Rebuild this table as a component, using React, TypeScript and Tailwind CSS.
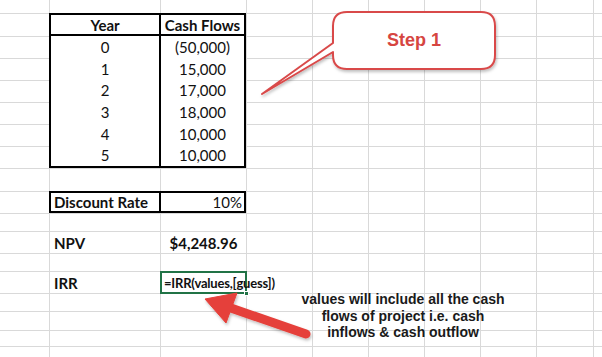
import React from "react";

const COLW = [
  "w-[49px]",
  "w-[111px]",
  "w-[86px]",
  "w-[66px]",
  "w-[56px]",
  "w-[56px]",
  "w-[56px]",
  "w-[56px]",
  "w-[57px]",
  "flex-1",
];

function Cells({ from, to, noTop = false }: { from: number; to: number; noTop?: boolean }) {
  const out: React.ReactNode[] = [];
  for (let i = from; i < to; i++) {
    out.push(
      <div
        key={i}
        className={`${COLW[i]} shrink-0 h-full border-[#d9d9d9] ${i > 0 ? "border-l" : ""} ${noTop ? "" : "border-t"}`}
      />
    );
  }
  return <>{out}</>;
}

function Row({ h, children, noTop = false }: { h: string; children?: React.ReactNode; noTop?: boolean }) {
  return (
    <div className={`flex shrink-0 ${h}`}>
      {children ?? <Cells from={0} to={10} noTop={noTop} />}
    </div>
  );
}

const tableRows: [string, string][] = [
  ["0", "(50,000)"],
  ["1", "15,000"],
  ["2", "17,000"],
  ["3", "18,000"],
  ["4", "10,000"],
  ["5", "10,000"],
];

const sideHeights = ["h-[23px]", "h-[22px]", "h-[22px]", "h-[22px]", "h-[22px]", "h-[22px]", "h-[22px]"];

export default function App() {
  return (
    <div className="relative w-[602px] h-[357px] overflow-hidden bg-white text-[#111] font-['Lato','Open_Sans',sans-serif] text-[15px] leading-[18px]">
      <div className="flex flex-col w-full">
        {/* row 0 */}
        <Row h="h-[13px]" noTop />

        {/* rows 1-7: cash flow table */}
        <div className="flex h-[155px] shrink-0">
          <div className="flex flex-col w-[49px] shrink-0">
            {sideHeights.map((h, i) => (
              <div key={i} className={`${h} shrink-0 border-t border-[#d9d9d9]`} />
            ))}
          </div>
          <div className="w-[197px] shrink-0 border-2 border-black flex flex-col bg-white">
            <div className="flex h-[21px] shrink-0 border-b-2 border-black font-bold">
              <div className="w-[110px] shrink-0 border-r-2 border-black flex items-center justify-center pt-px">
                Year
              </div>
              <div className="flex-1 flex items-center justify-center pt-px">Cash Flows</div>
            </div>
            {tableRows.map(([y, v]) => (
              <div key={y} className="flex flex-1 min-h-0">
                <div className="w-[110px] shrink-0 border-r-2 border-black flex items-center justify-center">
                  {y}
                </div>
                <div className="flex-1 flex items-center justify-center">{v}</div>
              </div>
            ))}
          </div>
          <div className="flex flex-col flex-1">
            {sideHeights.map((h, i) => (
              <div key={i} className={`flex shrink-0 ${h}`}>
                <Cells from={3} to={10} />
              </div>
            ))}
          </div>
        </div>

        {/* row 8 */}
        <Row h="h-[23px]" />

        {/* row 9: discount rate */}
        <Row h="h-[22px]">
          <Cells from={0} to={1} />
          <div className="w-[197px] shrink-0 h-full border-2 border-black flex bg-white">
            <div className="w-[110px] shrink-0 border-r-2 border-black flex items-center pl-[3px] font-bold">
              Discount Rate
            </div>
            <div className="flex-1 flex items-center justify-end pr-[2px]">10%</div>
          </div>
          <Cells from={3} to={10} />
        </Row>

        {/* row 10 */}
        <Row h="h-[18px]" />

        {/* row 11: NPV */}
        <Row h="h-[22px]">
          <Cells from={0} to={1} />
          <div className="w-[111px] shrink-0 h-full border-l border-t border-[#d9d9d9] flex items-center pl-[4px] font-bold">
            NPV
          </div>
          <div className="w-[86px] shrink-0 h-full border-l border-t border-[#d9d9d9] flex items-center justify-center font-bold">
            $4,248.96
          </div>
          <Cells from={3} to={10} />
        </Row>

        {/* row 12 */}
        <Row h="h-[18px]" />

        {/* row 13: IRR */}
        <Row h="h-[22px]">
          <Cells from={0} to={1} />
          <div className="w-[111px] shrink-0 h-full border-l border-t border-[#d9d9d9] flex items-center pl-[4px] font-bold">
            IRR
          </div>
          <div className="relative w-[86px] shrink-0 h-full border-t border-l border-[#d9d9d9]">
            <div className="absolute left-[-1px] top-[-1px] w-[87px] h-[23px] border-2 border-[#217346]" />
            <div className="absolute left-[3px] top-0 h-full flex items-center whitespace-nowrap font-bold text-[13px] tracking-[-0.2px]">
              =IRR(values,[guess])
            </div>
            <div className="absolute right-[-3px] bottom-[-3px] w-[5px] h-[5px] bg-[#217346] border border-white" />
          </div>
          <Cells from={3} to={10} />
        </Row>

        <Row h="h-[18px]" />
        <Row h="h-[19px]" />
        <Row h="h-[16px]" />
        <Row h="h-[11px]" />
      </div>

      {/* overlays: callout and arrow */}
      <svg
        className="absolute left-0 top-0 pointer-events-none"
        width="602"
        height="357"
        viewBox="0 0 602 357"
      >
        <defs>
          <filter id="sh" x="-20%" y="-20%" width="140%" height="160%">
            <feDropShadow dx="1" dy="2" stdDeviation="1.5" floodColor="#000" floodOpacity="0.25" />
          </filter>
        </defs>
        <path
          d="M 347 12 H 481 Q 495 12 495 26 V 55 Q 495 69 481 69 H 347 Q 333 69 333 55 V 52 L 262 94 L 333 43 V 26 Q 333 12 347 12 Z"
          fill="#ffffff"
          stroke="#d94a4a"
          strokeWidth="2"
          strokeLinejoin="round"
          filter="url(#sh)"
        />
        <g filter="url(#sh)" fill="#e5403a" stroke="#e5403a">
          <line x1="306" y1="334" x2="228" y2="307" strokeWidth="9" strokeLinecap="round" />
          <polygon points="205,299 237,293 226,323" strokeWidth="1" strokeLinejoin="round" />
        </g>
      </svg>

      <div className="absolute left-[333px] top-[12px] w-[162px] h-[57px] flex items-center justify-center font-['Liberation_Sans',Arial,sans-serif] font-bold text-[18px] text-[#d64541] pb-[2px]">
        Step 1
      </div>

      <div className="absolute left-[290px] top-[291px] w-[226px] text-center font-['Liberation_Sans',Arial,sans-serif] font-bold text-[14px] leading-[16.5px] text-[#1a1a1a]">
        values will include all the cash
        <br />
        flows of project i.e. cash
        <br />
        inflows &amp; cash outflow
      </div>
    </div>
  );
}
